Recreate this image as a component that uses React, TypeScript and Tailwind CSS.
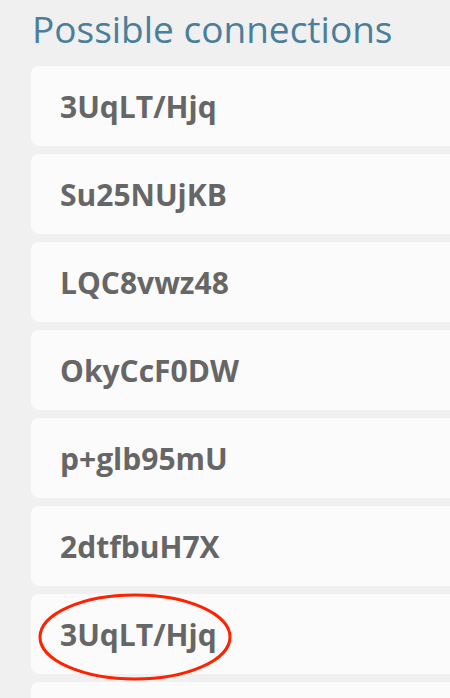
import React from "react";

const connections = [
	"3UqLT/Hjq",
	"Su25NUjKB",
	"LQC8vwz48",
	"OkyCcF0DW",
	"p+glb95mU",
	"2dtfbuH7X",
	"3UqLT/Hjq",
	"",
];

export default function App() {
	return (
		<div
			className="h-[698px] w-[450px] overflow-hidden bg-[#f0f0f0]"
			style={{ fontFamily: '"Open Sans", "Noto Sans", sans-serif' }}
		>
			<h1 className="ml-[32px] mt-[5px] h-[61px] whitespace-nowrap text-[37px] font-normal leading-[48px] text-[#4a7f9b]">
				Possible connections
			</h1>
			<div className="relative ml-[31px] flex w-[440px] flex-col gap-2">
				{connections.map((name, i) => (
					<div
						key={i}
						className="flex h-[80px] shrink-0 items-center rounded-lg bg-[#fbfbfb] pl-[29px] text-[30px] font-bold text-[#666666]"
					>
						{name}
					</div>
				))}
				{/* highlight around the repeated entry */}
				<svg
					className="pointer-events-none absolute left-[6px] top-[526px]"
					width="196"
					height="90"
					viewBox="0 0 196 90"
				>
					<ellipse
						cx="98"
						cy="45"
						rx="95"
						ry="42"
						fill="none"
						stroke="#ff2200"
						strokeWidth="3"
					/>
				</svg>
			</div>
		</div>
	);
}
